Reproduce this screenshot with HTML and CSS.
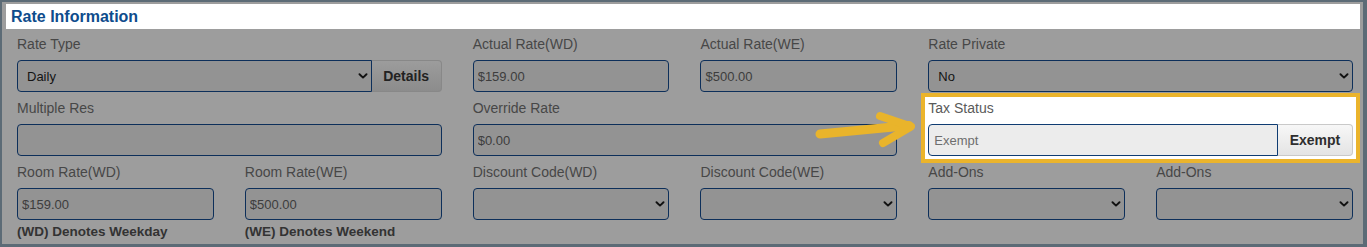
FILE: index.html
```html
<!DOCTYPE html>
<html lang="en">
<head>
<meta charset="utf-8">
<title>Rate Information</title>
<link rel="stylesheet" href="styles.css">
</head>
<body>
<div class="frame">
  <div class="header"><h2 class="title">Rate Information</h2></div>
  <div class="form">
    <div class="field span2">
      <label class="lbl">Rate Type</label>
      <div class="group">
        <div class="sel grow">
          <select class="ctl select left"><option>Daily</option></select>
          <svg class="chev" viewBox="0 0 10 6" width="10" height="6"><path d="M1.5 1.2 L5 4.6 L8.5 1.2" fill="none" stroke="#111" stroke-width="1.9" stroke-linecap="round" stroke-linejoin="round"/></svg>
        </div>
        <button class="btn dim-btn">Details</button>
      </div>
    </div>
    <div class="field">
      <label class="lbl">Actual Rate(WD)</label>
      <input class="ctl" value="$159.00">
    </div>
    <div class="field">
      <label class="lbl">Actual Rate(WE)</label>
      <input class="ctl" value="$500.00">
    </div>
    <div class="field span2">
      <label class="lbl">Rate Private</label>
      <div class="sel">
        <select class="ctl select"><option>No</option></select>
        <svg class="chev" viewBox="0 0 10 6" width="10" height="6"><path d="M1.5 1.2 L5 4.6 L8.5 1.2" fill="none" stroke="#111" stroke-width="1.9" stroke-linecap="round" stroke-linejoin="round"/></svg>
      </div>
    </div>

    <div class="field span2">
      <label class="lbl">Multiple Res</label>
      <input class="ctl" value="">
    </div>
    <div class="field span2">
      <label class="lbl">Override Rate</label>
      <input class="ctl" value="$0.00">
    </div>
    <div class="field span2 highlight">
      <label class="lbl lit">Tax Status</label>
      <div class="group">
        <input class="ctl lit-input left grow" value="Exempt">
        <button class="btn lit-btn">Exempt</button>
      </div>
    </div>

    <div class="field">
      <label class="lbl">Room Rate(WD)</label>
      <input class="ctl" value="$159.00">
      <div class="note">(WD) Denotes Weekday</div>
    </div>
    <div class="field">
      <label class="lbl">Room Rate(WE)</label>
      <input class="ctl" value="$500.00">
      <div class="note">(WE) Denotes Weekend</div>
    </div>
    <div class="field">
      <label class="lbl">Discount Code(WD)</label>
      <div class="sel">
        <select class="ctl select"><option></option></select>
        <svg class="chev" viewBox="0 0 10 6" width="10" height="6"><path d="M1.5 1.2 L5 4.6 L8.5 1.2" fill="none" stroke="#111" stroke-width="1.9" stroke-linecap="round" stroke-linejoin="round"/></svg>
      </div>
    </div>
    <div class="field">
      <label class="lbl">Discount Code(WE)</label>
      <div class="sel">
        <select class="ctl select"><option></option></select>
        <svg class="chev" viewBox="0 0 10 6" width="10" height="6"><path d="M1.5 1.2 L5 4.6 L8.5 1.2" fill="none" stroke="#111" stroke-width="1.9" stroke-linecap="round" stroke-linejoin="round"/></svg>
      </div>
    </div>
    <div class="field">
      <label class="lbl">Add-Ons</label>
      <div class="sel">
        <select class="ctl select"><option></option></select>
        <svg class="chev" viewBox="0 0 10 6" width="10" height="6"><path d="M1.5 1.2 L5 4.6 L8.5 1.2" fill="none" stroke="#111" stroke-width="1.9" stroke-linecap="round" stroke-linejoin="round"/></svg>
      </div>
    </div>
    <div class="field">
      <label class="lbl">Add-Ons</label>
      <div class="sel">
        <select class="ctl select"><option></option></select>
        <svg class="chev" viewBox="0 0 10 6" width="10" height="6"><path d="M1.5 1.2 L5 4.6 L8.5 1.2" fill="none" stroke="#111" stroke-width="1.9" stroke-linecap="round" stroke-linejoin="round"/></svg>
      </div>
    </div>
  </div>
  <svg class="arrow" viewBox="0 0 110 45" width="110" height="45">
    <path d="M10 26 L99 17.5" fill="none" stroke="#e9b42b" stroke-width="9" stroke-linecap="round"/>
    <path d="M70 8 L101 18.5 L73 35" fill="none" stroke="#e9b42b" stroke-width="8" stroke-linecap="round" stroke-linejoin="round"/>
  </svg>
</div>
</body>
</html>
```

FILE: styles.css
```css
* { box-sizing: border-box; }

html, body {
  margin: 0;
  padding: 0;
}

body {
  background: #5c6b76;
  font-family: "Liberation Sans", Arial, Helvetica, sans-serif;
  width: 1367px;
  height: 247px;
  overflow: hidden;
}

.frame {
  position: relative;
  margin: 2px 4px 0 2px;
  height: 242px;
  background: #9d9d9d;
  padding: 2px 3px 0 4px;
}

.header {
  height: 25px;
  background: #ffffff;
  padding-left: 5px;
  display: flex;
  align-items: center;
}

.title {
  margin: 0;
  font-size: 16px;
  font-weight: bold;
  color: #0e4c8c;
  line-height: 20px;
}

.form {
  display: grid;
  grid-template-columns: repeat(6, 1fr);
  column-gap: 31px;
  row-gap: 8px;
  padding: 7px 7px 0 11px;
  align-items: start;
}

.field {
  display: flex;
  flex-direction: column;
  min-width: 0;
}

.span2 { grid-column: span 2; }

.lbl {
  display: block;
  font-size: 14px;
  line-height: 17px;
  height: 16px;
  margin-bottom: 8px;
  color: #474747;
  white-space: nowrap;
}

.ctl {
  display: block;
  width: 100%;
  height: 32px;
  margin: 0;
  border: 1px solid #0d2f5a;
  border-radius: 4px;
  background: #939393;
  font-family: "Liberation Sans", Arial, Helvetica, sans-serif;
  font-size: 13px;
  color: #3d3d3d;
  padding: 0 4px;
  outline: none;
}

.select {
  -webkit-appearance: none;
  appearance: none;
  padding-left: 9px;
  color: #141414;
}

.sel {
  position: relative;
  width: 100%;
}

.chev {
  position: absolute;
  right: 4px;
  top: 13px;
  pointer-events: none;
}

.group {
  display: flex;
  width: 100%;
}

.grow {
  flex: 1 1 auto;
  min-width: 0;
}

.left {
  border-top-right-radius: 0;
  border-bottom-right-radius: 0;
}

.btn {
  flex: 0 0 auto;
  height: 32px;
  margin: 0;
  border-radius: 0 4px 4px 0;
  font-family: "Liberation Sans", Arial, Helvetica, sans-serif;
  font-size: 14px;
  font-weight: bold;
  padding: 0;
}

.dim-btn {
  width: 70px;
  border: 1px solid #888888;
  border-left: none;
  background: linear-gradient(#9c9c9c, #8c8c8c);
  color: #222222;
}

.highlight {
  background: #ffffff;
  box-shadow: 0 0 0 3px #ffffff, 0 0 0 7px #ebb42c;
}

.lit {
  color: #5a5a5a;
}

.lit-input {
  background: #ececec;
  border-color: #0f3c72;
  color: #6e6e6e;
  padding-left: 5px;
}

.lit-btn {
  width: 75px;
  border: 1px solid #c9c9c9;
  border-left: none;
  background: linear-gradient(#f7f7f7, #e4e4e4);
  color: #2e2e2e;
}

.note {
  margin-top: 4px;
  font-size: 13.5px;
  line-height: 16px;
  font-weight: bold;
  color: #333333;
  white-space: nowrap;
}

.arrow {
  position: absolute;
  left: 808px;
  top: 106px;
  pointer-events: none;
}
```
